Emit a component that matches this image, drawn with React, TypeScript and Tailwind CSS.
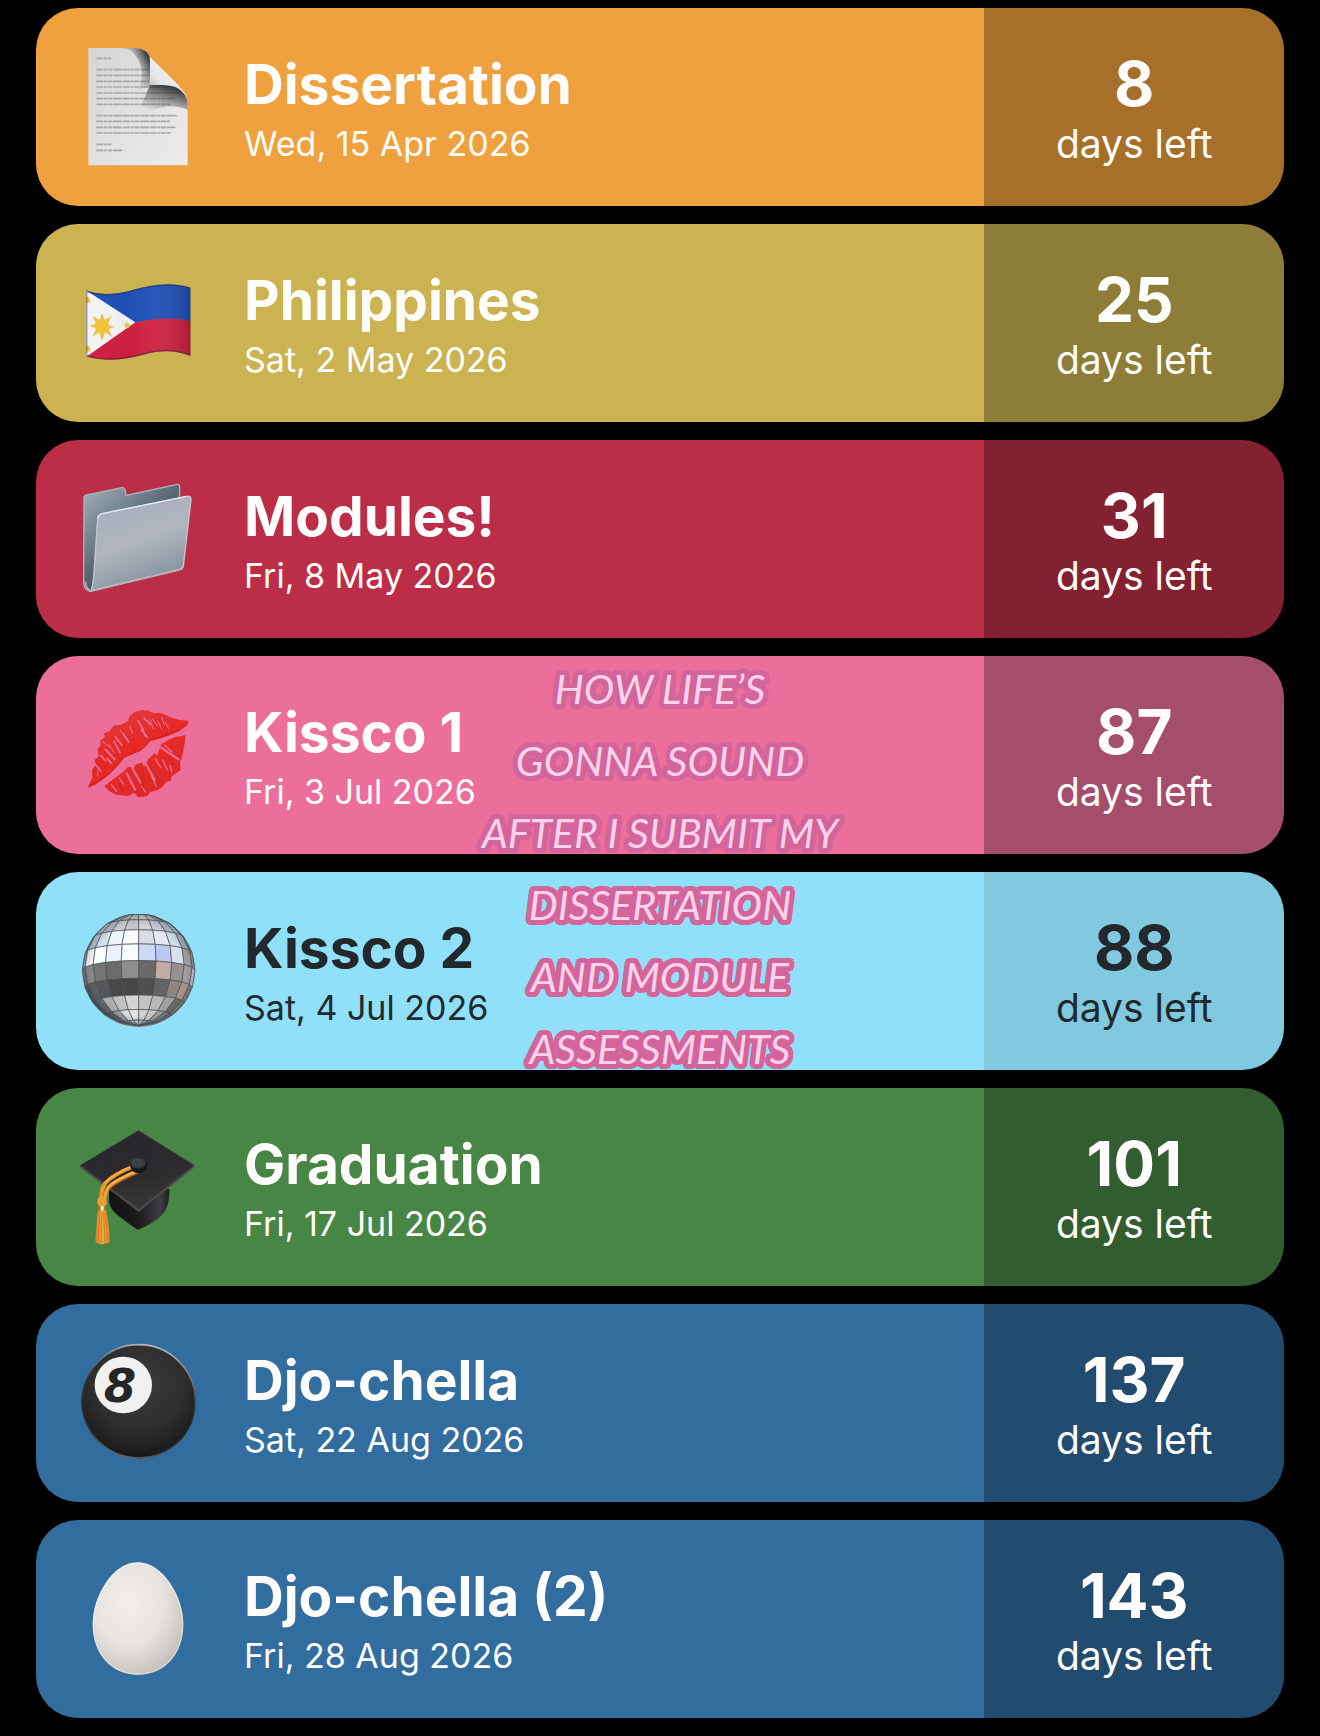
import React from 'react';
import clsx from 'clsx';

const PageIcon = () => (
  <svg viewBox="0 21 420 420" className="w-full" aria-hidden="true">
    <defs>
      <linearGradient id="paper" x1="0" y1="0" x2="1" y2="1">
        <stop offset="0" stopColor="#d6d6d6" />
        <stop offset="1" stopColor="#ececec" />
      </linearGradient>
      <linearGradient id="shadeTop" x1="180" y1="130" x2="243" y2="100" gradientUnits="userSpaceOnUse">
        <stop offset="0" stopColor="#333" stopOpacity="0" />
        <stop offset="0.6" stopColor="#333" stopOpacity="0.35" />
        <stop offset="1" stopColor="#222" stopOpacity="0.85" />
      </linearGradient>
      <linearGradient id="shadeLow" x1="290" y1="170" x2="265" y2="250" gradientUnits="userSpaceOnUse">
        <stop offset="0" stopColor="#222" stopOpacity="0.85" />
        <stop offset="0.5" stopColor="#333" stopOpacity="0.4" />
        <stop offset="1" stopColor="#333" stopOpacity="0" />
      </linearGradient>
      <linearGradient id="curl" x1="240" y1="170" x2="290" y2="115" gradientUnits="userSpaceOnUse">
        <stop offset="0" stopColor="#b8b8b8" />
        <stop offset="0.4" stopColor="#e4e4e6" />
        <stop offset="1" stopColor="#f2f2f4" />
      </linearGradient>
    </defs>
    <path d="M55 54H196Q232 56 240 82L328 170Q350 188 353 222V406H55Z" fill="url(#paper)" />
    <g stroke="#a9a9a9" strokeWidth="5" strokeDasharray="21 2 9 2 14 2 28 2">
      <path d="M79 85H124M79 119H236M79 136H240M79 154H240M79 171H270M79 189H330M79 206H316M79 223H300M79 257H322M79 274H300M79 292H316M79 309H303M79 343H124M79 361H156" />
    </g>
    <path d="M150 54H196Q232 56 240 82V168L205 180Q235 110 182 60Z" fill="url(#shadeTop)" />
    <path d="M240 165Q290 162 318 172Q350 188 353 222V240Q300 214 230 250L214 226Z" fill="url(#shadeLow)" />
    <path d="M239 80L330 170Q290 160 241 166Q243 120 239 80Z" fill="url(#curl)" />
  </svg>
);

const FlagIcon = () => (
  <svg viewBox="0 -21 420 420" className="w-full" aria-hidden="true">
    <defs>
      <clipPath id="wave">
        <path d="M48 91Q100 112 180 92Q290 58 362 83V288Q300 262 220 284Q120 312 48 289Z" />
      </clipPath>
      <linearGradient id="fold" x1="0" y1="0" x2="1" y2="0">
        <stop offset="0" stopColor="#fff" stopOpacity="0" />
        <stop offset="0.35" stopColor="#000" stopOpacity="0.02" />
        <stop offset="0.6" stopColor="#fff" stopOpacity="0.04" />
        <stop offset="1" stopColor="#000" stopOpacity="0.16" />
      </linearGradient>
    </defs>
    <g clipPath="url(#wave)">
      <path d="M48 60H362V185Q290 168 195 188L48 210Z" fill="#1f50b8" />
      <path d="M48 210L195 188Q290 166 362 183V320H48Z" fill="#cf2140" />
      <path d="M48 91L196 187L48 291Z" fill="#f3f3f6" />
      <g fill="#eec43c">
        <circle cx="96" cy="198" r="21" />
        <path d="M96 158l9 26h-18zM96 244l9-28h-18zM58 198l26-8v17zM134 201l-26-8v17zM67 167l23 14-11 11zM125 167l-11 25-11-11zM67 230l12-25 11 11zM126 230l-23-14 11-11z" />
        <path d="M171 184l3 7 8 1-6 5 1 8-6-4-7 4 2-8-6-5 7-1zM55 110l3 7 6 2-5 5 1 7-6-4-6 3V112zM55 256l3 7 6 2-5 5 1 7-6-4-6 3V258z" />
      </g>
      <path d="M48 60H362V320H48Z" fill="url(#fold)" />
      <path d="M48 91Q100 112 180 92Q290 58 362 83V288Q300 262 220 284Q120 312 48 289Z" fill="none" stroke="#2a2a48" strokeOpacity="0.45" strokeWidth="9" />
    </g>
  </svg>
);

const FolderIcon = () => (
  <svg viewBox="0 -3 420 420" className="w-full" aria-hidden="true">
    <defs>
      <linearGradient id="folderBack" x1="0" y1="0.1" x2="0.5" y2="0.7">
        <stop offset="0" stopColor="#9daab4" />
        <stop offset="1" stopColor="#43535f" />
      </linearGradient>
      <linearGradient id="folderFront" x1="0.2" y1="0" x2="0.6" y2="1">
        <stop offset="0" stopColor="#a6adba" />
        <stop offset="0.5" stopColor="#b1b6bf" />
        <stop offset="1" stopColor="#7f8f99" />
      </linearGradient>
    </defs>
    <path d="M42 84Q42 77 50 75L156 53Q164 52 165 59L168 76L322 43Q329 42 329 50L325 300L62 364Q42 362 41 340Z" fill="url(#folderBack)" stroke="#aab4bc" strokeWidth="4" />
    <path d="M83 146Q85 134 97 131L350 79Q363 77 363 89L340 288Q338 297 330 298L62 363Q70 350 73 290Z" fill="url(#folderFront)" stroke="#c3c9d0" strokeWidth="4" />
    <path d="M46 335Q48 358 62 363L330 299" fill="none" stroke="#b9b3b9" strokeWidth="5" />
    <path d="M83 146Q85 134 97 131L350 79" fill="none" stroke="#e3e9f0" strokeWidth="4" />
  </svg>
);

const KissIcon = () => (
  <svg viewBox="0 -15 420 420" className="w-full" aria-hidden="true">
    <defs>
      <linearGradient id="lip" x1="0" y1="0" x2="0.6" y2="1">
        <stop offset="0" stopColor="#de4348" />
        <stop offset="0.5" stopColor="#e52a26" />
        <stop offset="1" stopColor="#de2826" />
      </linearGradient>
    </defs>
    <path d="M53 294L67 262L66 240L78 222L74 210L86 198L82 178L92 166L90 152L104 142L102 130L118 124L132 106L152 104L174 94L178 78L194 66L216 60L236 62L252 70L268 68L286 74L300 82L314 86L330 90L356 92L352 106L330 122L300 136L268 146L240 154L226 170L212 182L188 192L162 204L146 224L124 248L100 268L76 284Z" fill="url(#lip)" />
    <path d="M103 288L124 272L146 256L162 244L172 232L182 230L190 242L196 224L216 218L222 230L236 206L254 190L262 196L268 178L272 164L294 150L318 140L347 136L344 160L340 184L334 208L330 216L332 240L318 250L306 258L302 272L288 276L276 292L264 300L256 302L240 306L232 318L204 322L192 308L176 318L156 316L138 314L118 304Z" fill="url(#lip)" />
    <g stroke="#ec6f9b" strokeLinecap="round" fill="none">
      <path strokeWidth="5" d="M136 140L156 166M132 154L150 188M160 132L176 156M106 178L134 208M92 196L106 212M78 226L92 244M204 92L218 116L226 138M222 84L242 104M214 120L232 142M112 206L124 220" />
      <path strokeWidth="3" d="M240 90L250 116M262 92L276 118M286 96L296 116M180 110L188 130M150 120L162 136M98 156L118 170M82 244L84 258M248 88L262 108M118 164L132 188M276 82L282 104" />
      <path strokeWidth="6" d="M170 250L196 300M188 236L212 278M228 222L254 270M272 172L326 208" />
      <path strokeWidth="4" d="M256 206L272 232M216 290L226 306M176 262L184 282M300 226L306 246M124 284L140 304M242 250L258 288M284 166L306 186M278 210L292 240M148 264L160 282" />
    </g>
    <g stroke="#b3121d" strokeOpacity="0.45" strokeWidth="3" fill="none">
      <path d="M60 288L100 264L124 244L146 220L162 202L212 180L226 168L240 152L330 120M140 196L152 206M190 170L196 184M286 126L294 132M212 250L222 300M256 240L268 280M150 286L160 306M300 200L312 226" />
    </g>
  </svg>
);

const BALL = { cx: 206, cy: 211, r: 169 };
const rad = (deg: number) => (deg * Math.PI) / 180;
const project = (lat: number, lon: number) => {
  const tilt = rad(10);
  const x = BALL.cx + BALL.r * Math.cos(rad(lat)) * Math.sin(rad(lon));
  const y =
    BALL.cy -
    BALL.r * (Math.sin(rad(lat)) * Math.cos(tilt) + Math.cos(rad(lat)) * Math.cos(rad(lon)) * Math.sin(tilt));
  return `${x.toFixed(1)},${y.toFixed(1)}`;
};

// one row of mirror tiles per latitude band, left to right
const mirrorRows = [
  { top: 90, tiles: ['#a9b2c4', '#b4bccb', '#b9bfc9', '#c3c5ca', '#bcbfc6', '#c3c3c9', '#b5b5c2', '#b5bccb', '#a8b3c4', '#a8b3c4'] },
  { top: 72, tiles: ['#96a8bf', '#b1bacd', '#b5b8c6', '#b9bbc2', '#c3c3c6', '#d3d1d6', '#bfbcc9', '#b3b7c8', '#a8b3c8', '#9badc2'] },
  { top: 54, tiles: ['#9eb6cc', '#c2c9dc', '#bcbdca', '#cfcdd0', '#c8c8cb', '#d2d0d4', '#cdc8d3', '#b7bccd', '#b6c6d8', '#9fb6c8'] },
  { top: 36, tiles: ['#98aab9', '#b8c9da', '#d3e3f0', '#eff6fa', '#fafcff', '#dcdce6', '#e2e8f5', '#d0dcec', '#a7b5c6', '#8f9eab'] },
  { top: 18, tiles: ['#9daab2', '#ffffff', '#fafdff', '#eaf3fc', '#f5fbff', '#cfd8f4', '#bac9ef', '#d8e3ee', '#a9a5a6', '#99a1a7'] },
  { top: 0, tiles: ['#75777a', '#8d8c8c', '#757575', '#6b6b6b', '#8e8e8e', '#696969', '#c1aca4', '#96908e', '#a8a4a3', '#d5d8da'] },
  { top: -18, tiles: ['#51585c', '#5d6163', '#555759', '#484848', '#474747', '#4f4f4f', '#646464', '#8d8582', '#b09b92', '#8f8a88'] },
  { top: -36, tiles: ['#4d5357', '#62676a', '#adadae', '#c1c1c2', '#d4d4d4', '#c3c3c4', '#b8b8b8', '#a3a3a4', '#736d6a', '#867e7a'] },
  { top: -54, tiles: ['#50565a', '#5b6166', '#9c9c9e', '#dadada', '#e4e4e4', '#d2d2d2', '#c6c6c6', '#a19f9f', '#7e8083', '#71777b'] },
  { top: -72, tiles: ['#6b6f74', '#7b7d80', '#a7a7a9', '#bebebe', '#d0d0d0', '#cacaca', '#b5b5b5', '#979799', '#77797c', '#6b6f74'] },
];

const DiscoIcon = () => (
  <svg viewBox="0 3 420 420" className="w-full" aria-hidden="true">
    <defs>
      <radialGradient id="ballShade">
        <stop offset="0.8" stopColor="#24313b" stopOpacity="0" />
        <stop offset="1" stopColor="#24313b" stopOpacity="0.25" />
      </radialGradient>
    </defs>
    <circle cx={BALL.cx} cy={BALL.cy} r={BALL.r} fill="#8f989f" />
    <g stroke="#4b5056" strokeWidth="2" strokeLinejoin="round">
      {mirrorRows.map((row) =>
        row.tiles.map((color, i) => {
          const left = -90 + i * 18;
          const points = [
            project(row.top, left),
            project(row.top, left + 18),
            project(row.top - 18, left + 18),
            project(row.top - 18, left),
          ].join(' ');
          return <polygon key={`${row.top}-${i}`} points={points} fill={color} />;
        })
      )}
    </g>
    <circle cx={BALL.cx} cy={BALL.cy} r={BALL.r} fill="url(#ballShade)" />
  </svg>
);

const CapIcon = () => (
  <svg viewBox="0 6 420 420" className="w-full" aria-hidden="true">
    <defs>
      <linearGradient id="board" x1="0.3" y1="0" x2="0.6" y2="1">
        <stop offset="0" stopColor="#27262a" />
        <stop offset="0.6" stopColor="#2d2b2e" />
        <stop offset="1" stopColor="#3a383b" />
      </linearGradient>
      <linearGradient id="crown" x1="0" y1="0" x2="1" y2="0">
        <stop offset="0" stopColor="#121213" />
        <stop offset="0.5" stopColor="#1c1b1d" />
        <stop offset="0.85" stopColor="#403e42" />
        <stop offset="1" stopColor="#1d1c1e" />
      </linearGradient>
      <linearGradient id="tassel" x1="0" y1="0" x2="1" y2="0">
        <stop offset="0" stopColor="#d9822a" />
        <stop offset="0.5" stopColor="#f4a93c" />
        <stop offset="1" stopColor="#dc8729" />
      </linearGradient>
    </defs>
    <path d="M117 226V258Q120 282 142 300Q172 324 203 344Q244 330 276 300Q298 278 299 222Z" fill="url(#crown)" />
    <path d="M205 45L374 150V156L206 291L30 157V151Z" fill="#4b494c" />
    <path d="M205 47L371 151L206 282L32 151Z" fill="url(#board)" />
    <g fill="none" strokeLinecap="round">
      <path d="M202 170Q150 192 122 212Q98 228 96 262" stroke="#a35d18" strokeWidth="13" />
      <path d="M186 156Q130 178 106 204Q90 226 94 262" stroke="#e8982f" strokeWidth="12" />
      <path d="M200 169Q150 190 124 208Q104 226 103 262" stroke="#f0a238" strokeWidth="10" />
      <path d="M182 155Q130 178 106 202" stroke="#ffc158" strokeWidth="3" />
      <path d="M190 171Q150 190 126 206" stroke="#ffc158" strokeWidth="3" />
    </g>
    <ellipse cx="206" cy="151" rx="26" ry="24" fill="#171a1d" />
    <ellipse cx="204" cy="144" rx="23" ry="17" fill="#343a3f" />
    <path d="M188 138L204 133L219 140L210 151L194 150ZM204 133L210 151" fill="none" stroke="#4e555b" strokeWidth="2" />
    <path d="M83 250Q96 240 108 252L111 266L105 274H86L82 264Z" fill="#ec9d34" />
    <path d="M84 284Q98 278 108 286Q118 330 119 380Q114 386 108 384Q96 392 86 385Q78 386 76 378Q78 330 84 284Z" fill="url(#tassel)" />
    <path d="M90 292L84 380M96 292L94 384M101 292L105 382M105 292L113 376" stroke="#c66f20" strokeWidth="2" />
    <path d="M85 274Q96 270 106 274V289Q96 285 85 289Z" fill="#b07a22" />
    <path d="M92 272H101V287H92Z" fill="#f4e7b5" />
  </svg>
);

const EightBallIcon = () => (
  <svg viewBox="0 9 420 420" className="w-full" aria-hidden="true">
    <defs>
      <radialGradient id="eight" cx="0.5" cy="0.35" r="0.68">
        <stop offset="0" stopColor="#3c3c3d" />
        <stop offset="0.6" stopColor="#2d2d2e" />
        <stop offset="1" stopColor="#161617" />
      </radialGradient>
      <linearGradient id="eightRim" x1="0.6" y1="0" x2="0.35" y2="1">
        <stop offset="0" stopColor="#b6bbc0" />
        <stop offset="0.35" stopColor="#696c70" stopOpacity="0.6" />
        <stop offset="0.65" stopColor="#333" stopOpacity="0.2" />
        <stop offset="1" stopColor="#707c86" stopOpacity="0.8" />
      </linearGradient>
    </defs>
    <circle cx="206" cy="214" r="172" fill="url(#eight)" />
    <circle cx="206" cy="214" r="170" fill="none" stroke="url(#eightRim)" strokeWidth="5" />
    <ellipse cx="160" cy="165" rx="86" ry="85" fill="#f0f0f1" />
    <text x="150" y="215" textAnchor="middle" className="fill-[#262627] font-['DejaVu_Sans',sans-serif] text-[140px] font-bold italic">
      8
    </text>
  </svg>
);

const EggIcon = () => (
  <svg viewBox="0 -3 420 420" className="w-full" aria-hidden="true">
    <defs>
      <radialGradient id="shell" cx="0.4" cy="0.36" r="0.7">
        <stop offset="0" stopColor="#f1eeeb" />
        <stop offset="0.55" stopColor="#e7e4e0" />
        <stop offset="0.85" stopColor="#cfcac4" />
        <stop offset="1" stopColor="#c2bdb7" />
      </radialGradient>
    </defs>
    <path d="M203 37C278 37 340 140 340 222C340 312 284 374 204 374C124 374 68 312 68 222C68 140 128 37 203 37Z" fill="url(#shell)" />
    <path d="M203 39C276 39 338 140 338 222C338 312 284 372 204 372C124 372 70 312 70 222C70 140 130 39 203 39Z" fill="none" stroke="#fff" strokeOpacity="0.4" strokeWidth="4" />
  </svg>
);

interface Countdown {
  title: string;
  date: string;
  days: number;
  color: string;
  icon: React.FC;
  light?: boolean;
}

const countdowns: Countdown[] = [
  { title: 'Dissertation', date: 'Wed, 15 Apr 2026', days: 8, color: 'bg-[#eea13e]', icon: PageIcon },
  { title: 'Philippines', date: 'Sat, 2 May 2026', days: 25, color: 'bg-[#cbb351]', icon: FlagIcon },
  { title: 'Modules!', date: 'Fri, 8 May 2026', days: 31, color: 'bg-[#bc2e47]', icon: FolderIcon },
  { title: 'Kissco 1', date: 'Fri, 3 Jul 2026', days: 87, color: 'bg-[#ec6f9b]', icon: KissIcon },
  { title: 'Kissco 2', date: 'Sat, 4 Jul 2026', days: 88, color: 'bg-[#8fe0f8]', icon: DiscoIcon, light: true },
  { title: 'Graduation', date: 'Fri, 17 Jul 2026', days: 101, color: 'bg-[#478645]', icon: CapIcon },
  { title: 'Djo-chella', date: 'Sat, 22 Aug 2026', days: 137, color: 'bg-[#316d9f]', icon: EightBallIcon },
  { title: 'Djo-chella (2)', date: 'Fri, 28 Aug 2026', days: 143, color: 'bg-[#316d9f]', icon: EggIcon },
];

const captionLines = ['HOW LIFE’S', 'GONNA SOUND', 'AFTER I SUBMIT MY', 'DISSERTATION', 'AND MODULE', 'ASSESSMENTS'];

const CountdownCard: React.FC<{ item: Countdown }> = ({ item }) => {
  const Icon = item.icon;

  return (
    <li
      className={clsx(
        'flex overflow-hidden rounded-[42px]',
        item.color,
        item.light ? 'text-[#22282c]' : 'text-[#fffdfb]'
      )}
    >
      <div className="flex min-w-0 flex-1 items-center gap-[34px] py-[29px] pl-[34px]">
        <div className="w-[140px] shrink-0">
          <Icon />
        </div>
        <div className="min-w-0 pt-2.5">
          <h2 className="text-[55px] leading-[64px] font-bold">{item.title}</h2>
          <p className="text-[34px] leading-[56px]">{item.date}</p>
        </div>
      </div>
      <div
        className={clsx(
          'flex w-[24%] shrink-0 flex-col items-center justify-center pt-2.5',
          item.light ? 'bg-black/10' : 'bg-black/30'
        )}
      >
        <span className="text-[62px] leading-[64px] font-bold">{item.days}</span>
        <span className="text-[39px] leading-[56px]">days left</span>
      </div>
    </li>
  );
};

export default function App() {
  return (
    <main className="min-h-screen bg-black px-9 pt-2 pb-[18px] font-['Inter',sans-serif]">
      <div className="relative">
        <ul className="flex flex-col gap-[18px]">
          {countdowns.map((item) => (
            <CountdownCard key={item.title} item={item} />
          ))}
        </ul>

        {/* caption laid over the middle of the list */}
        <p className="pointer-events-none absolute inset-x-0 top-[645px] text-center font-['Lato',sans-serif] text-[41px] leading-[72px] text-[#fdd3ec] italic [text-shadow:5px_0_#d4659a,-5px_0_#d4659a,0_5px_#d4659a,0_-5px_#d4659a,4px_4px_#d4659a,-4px_4px_#d4659a,4px_-4px_#d4659a,-4px_-4px_#d4659a,5px_2px_#d4659a,-5px_2px_#d4659a,5px_-2px_#d4659a,-5px_-2px_#d4659a,2px_5px_#d4659a,-2px_5px_#d4659a,2px_-5px_#d4659a,-2px_-5px_#d4659a,2px_2px_#d4659a,-2px_-2px_#d4659a]">
          {captionLines.map((line) => (
            <span key={line} className="block">
              {line}
            </span>
          ))}
        </p>
      </div>
    </main>
  );
}
